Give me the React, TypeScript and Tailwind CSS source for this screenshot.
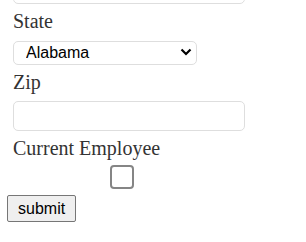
import React from 'react';

export default function App() {
  return (
    <div className="bg-white w-[306px] h-[242px] overflow-hidden">
      <form className="flex flex-col items-start -mt-[26px] font-['Liberation_Serif',serif] text-[20px] leading-[23px] text-[#333]">
        <input
          type="text"
          className="ml-[13px] w-[232px] h-[30px] border border-[#dedede] rounded-[5px] bg-white"
        />
        <label className="ml-[13px] mt-[6px]">State</label>
        <div className="relative ml-[13px] mt-[7px]">
          <select className="appearance-none w-[184px] h-[24px] border border-[#dedede] rounded-[5px] bg-white pl-[12px] font-['Liberation_Sans',sans-serif] text-[16px] leading-[18px] text-black">
            <option>Alabama</option>
          </select>
          <svg
            className="absolute right-[5px] top-[8px] pointer-events-none"
            width="12"
            height="8"
            viewBox="0 0 12 8"
          >
            <path d="M1.5 1.5 L6 6 L10.5 1.5" fill="none" stroke="#000" strokeWidth="2.2" />
          </svg>
        </div>
        <label className="ml-[13px] mt-[6px]">Zip</label>
        <input
          type="text"
          className="ml-[13px] mt-[7px] w-[232px] h-[30px] border border-[#dedede] rounded-[5px] bg-white"
        />
        <label className="ml-[13px] mt-[6px]">Current Employee</label>
        <input
          type="checkbox"
          className="appearance-none ml-[110px] mt-[5px] w-[24px] h-[24px] border-2 border-[#858585] rounded-[4px] bg-white"
        />
        <button
          type="button"
          className="ml-[7px] mt-[6px] h-[27px] px-[10px] border border-[#767676] rounded-[2px] bg-[#efefef] font-['Liberation_Sans',sans-serif] text-[16px] leading-[18px] text-black"
        >
          submit
        </button>
      </form>
    </div>
  );
}
